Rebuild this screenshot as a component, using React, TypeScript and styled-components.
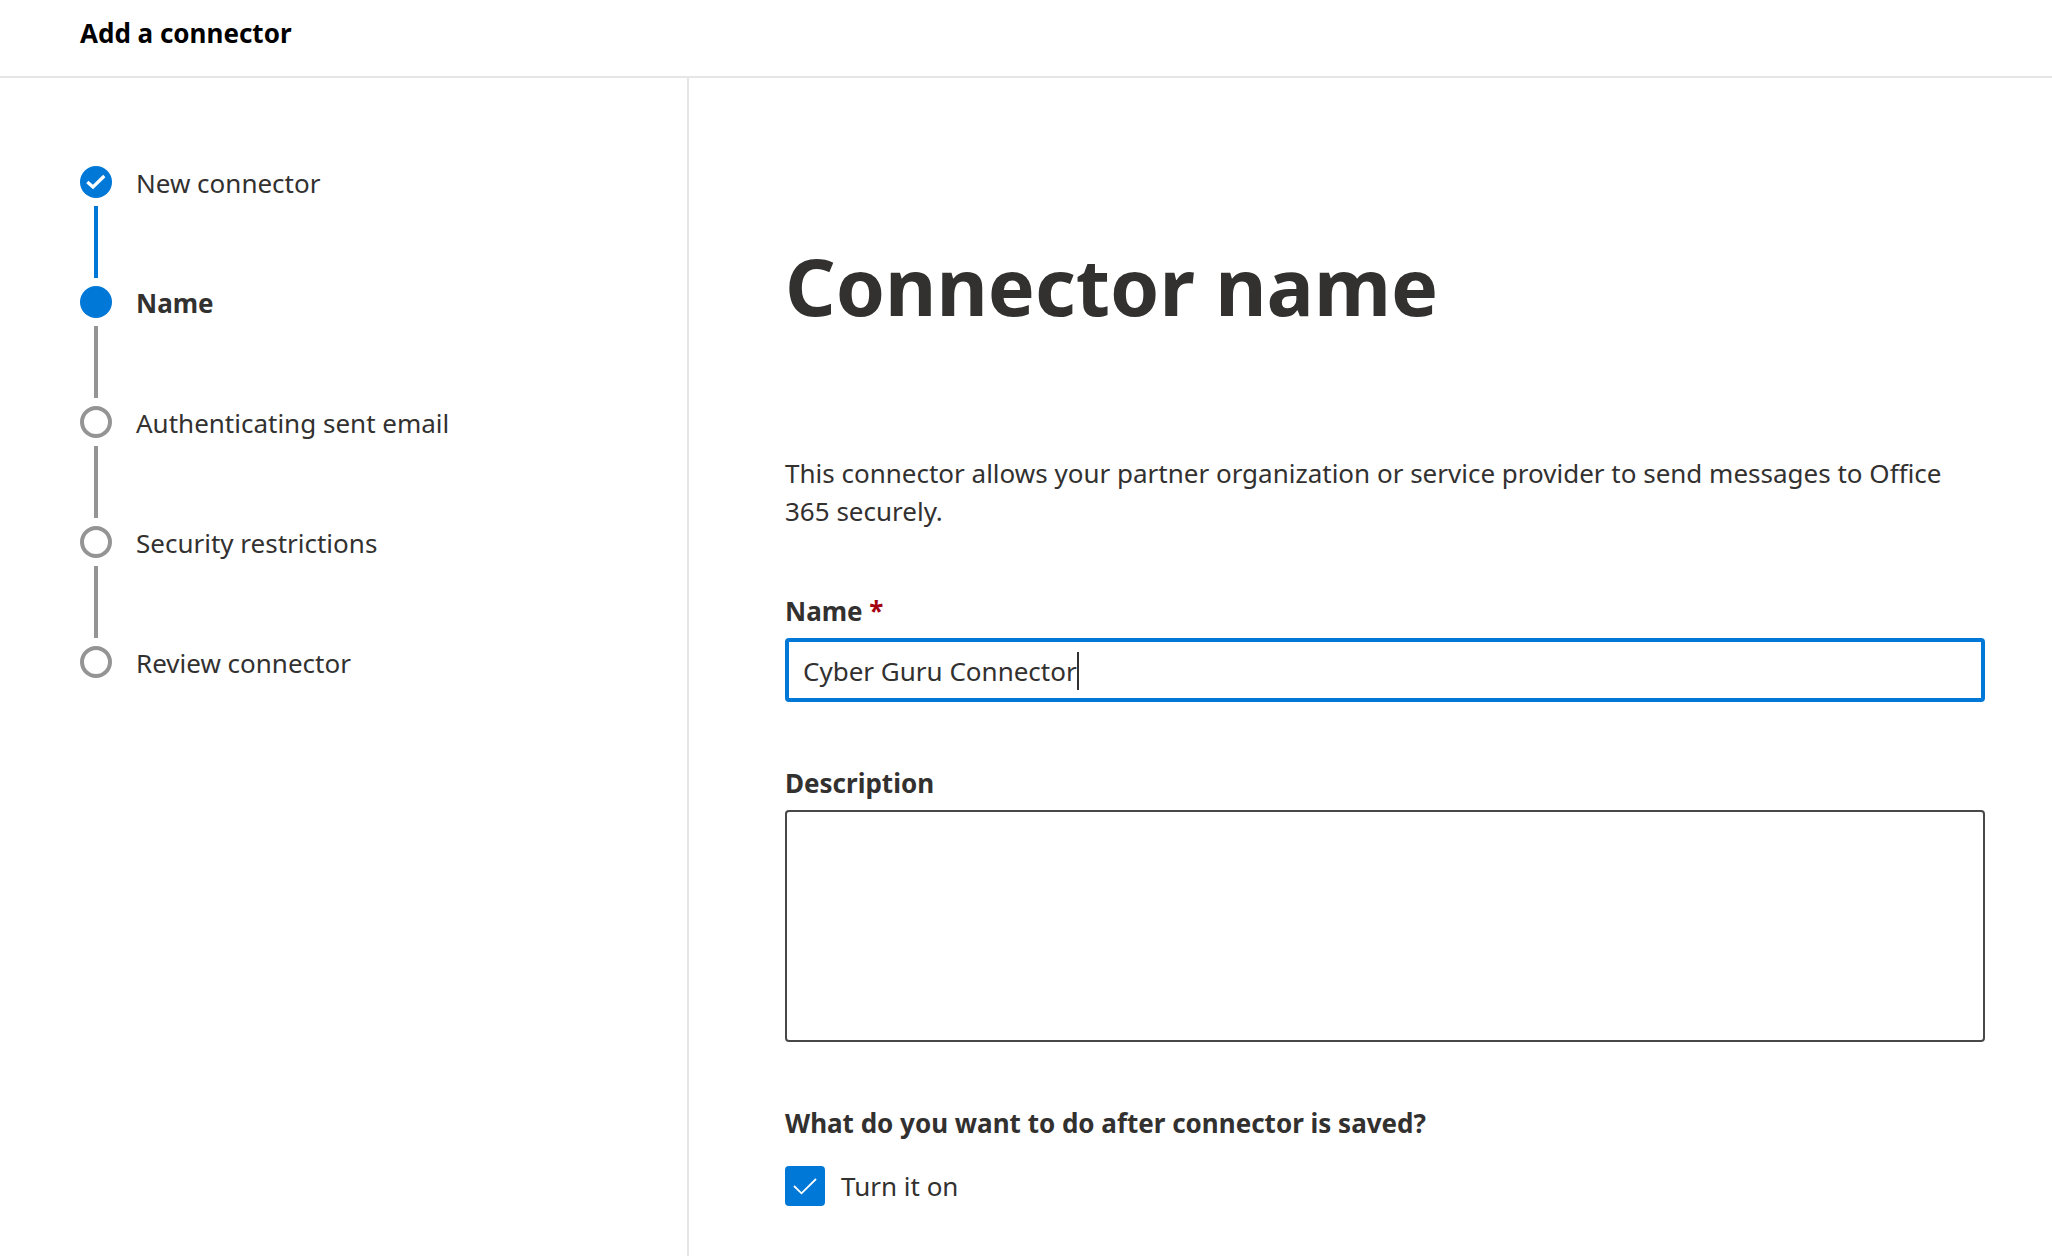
import { useState } from "react";
import styled, { createGlobalStyle, css } from "styled-components";

const GlobalStyle = createGlobalStyle`
  *, *::before, *::after { box-sizing: border-box; }
  body {
    margin: 0;
    background: #fff;
    color: #323130;
    font-family: "Segoe UI", "Noto Sans", "Open Sans", sans-serif;
    font-size: 26px;
    line-height: 38px;
  }
  h1, h2, p, ol { margin: 0; padding: 0; }
`;

const Page = styled.div`
  min-height: 100vh;
  display: flex;
  flex-direction: column;
`;

const Header = styled.header`
  padding: 14px 80px 24px;
  border-bottom: 2px solid #e6e6e6;
`;

const HeaderTitle = styled.h2`
  color: #000;
  font-size: 26px;
  font-weight: 700;
`;

const Body = styled.div`
  flex: 1;
  display: flex;
`;

const Sidebar = styled.nav`
  flex: 0 0 689px;
  padding: 88px 80px;
  border-right: 2px solid #e6e6e6;
`;

const StepList = styled.ol`
  list-style: none;
  display: flex;
  flex-direction: column;
  gap: 8px;
`;

type StepState = "done" | "current" | "todo";

const StepItem = styled.li`
  display: grid;
  grid-template-columns: 32px 1fr;
  grid-template-rows: 32px;
  column-gap: 24px;
  row-gap: 8px;
  justify-items: start;
`;

const StepMarker = styled.span<{ $state: StepState }>`
  width: 32px;
  height: 32px;
  display: flex;
  align-items: center;
  justify-content: center;
  border-radius: 50%;
  ${({ $state }) =>
    $state === "todo"
      ? css`border: 4px solid #949494;`
      : css`background: #0078d7;`}
`;

const StepLabel = styled.span<{ $current: boolean }>`
  line-height: 34px;
  font-weight: ${({ $current }) => ($current ? 700 : 400)};
`;

const StepTrack = styled.span<{ $done: boolean }>`
  width: 4px;
  height: 72px;
  justify-self: center;
  background: ${({ $done }) => ($done ? "#0078d7" : "#949494")};
`;

const Main = styled.main`
  flex: 1;
  min-width: 0;
  padding: 152px 67px 50px 96px;
`;

const Title = styled.h1`
  margin-bottom: 112px;
  font-size: 79px;
  line-height: 112px;
  font-weight: 700;
`;

const Form = styled.form`
  display: flex;
  flex-direction: column;
  gap: 62px;
`;

const Field = styled.div`
  display: flex;
  flex-direction: column;
  gap: 8px;
`;

const Label = styled.label`
  font-weight: 700;
`;

const Required = styled.span`
  color: #a4000f;
`;

const InputFrame = styled.label`
  height: 64px;
  display: flex;
  align-items: center;
  padding: 2px 14px 0;
  border: 4px solid #0078d7;
  border-radius: 4px;
  cursor: text;
`;

const TextInput = styled.input`
  field-sizing: content;
  min-width: 0;
  max-width: 100%;
  height: 38px;
  padding: 0;
  border: 0;
  outline: 0;
  background: transparent;
  color: inherit;
  font: inherit;
  caret-color: transparent;
`;

const Caret = styled.span`
  width: 2px;
  height: 38px;
  background: #323130;
`;

const TextArea = styled.textarea`
  display: block;
  width: 100%;
  height: 232px;
  padding: 12px 16px;
  border: 2px solid #484848;
  border-radius: 4px;
  outline: 0;
  resize: none;
  color: inherit;
  font: inherit;
`;

const Choices = styled.fieldset`
  min-width: 0;
  margin: 0;
  padding: 0;
  border: 0;
`;

const Legend = styled.legend`
  margin-bottom: 24px;
  padding: 0;
  font-weight: 700;
`;

const CheckLabel = styled.label`
  display: flex;
  align-items: center;
  gap: 16px;
  line-height: 40px;
`;

const CheckControl = styled.span`
  width: 40px;
  height: 40px;
  display: grid;
  & > * { grid-area: 1 / 1; }
  svg { pointer-events: none; }
`;

const CheckInput = styled.input`
  appearance: none;
  width: 40px;
  height: 40px;
  margin: 0;
  border: 2px solid #484848;
  border-radius: 4px;
  &:checked { background: #0078d7; border-color: #0078d7; }
`;

const steps: { label: string; state: StepState }[] = [
  { label: "New connector", state: "done" },
  { label: "Name", state: "current" },
  { label: "Authenticating sent email", state: "todo" },
  { label: "Security restrictions", state: "todo" },
  { label: "Review connector", state: "todo" },
];

export default function App() {
  const [name, setName] = useState("Cyber Guru Connector");
  const [enabled, setEnabled] = useState(true);

  return (
    <Page>
      <GlobalStyle />
      <Header>
        <HeaderTitle>Add a connector</HeaderTitle>
      </Header>
      <Body>
        <Sidebar aria-label="Steps">
          <StepList>
            {steps.map(({ label, state }, index) => (
              <StepItem key={label} aria-current={state === "current" ? "step" : undefined}>
                <StepMarker $state={state}>
                  {state === "done" && (
                    <svg width="32" height="32" viewBox="0 0 32 32" fill="none" aria-hidden="true">
                      <path d="M7.3 16 13 21 24.3 10" stroke="#fff" strokeWidth="3.2" />
                    </svg>
                  )}
                </StepMarker>
                <StepLabel $current={state === "current"}>{label}</StepLabel>
                {index < steps.length - 1 && <StepTrack $done={state === "done"} />}
              </StepItem>
            ))}
          </StepList>
        </Sidebar>
        <Main>
          <Title>Connector name</Title>
          <Form onSubmit={(event) => event.preventDefault()}>
            <p>
              This connector allows your partner organization or service provider to send messages
              to Office 365 securely.
            </p>
            <Field>
              <Label htmlFor="connector-name">
                Name <Required>*</Required>
              </Label>
              <InputFrame htmlFor="connector-name">
                <TextInput
                  id="connector-name"
                  type="text"
                  required
                  value={name}
                  onChange={(event) => setName(event.target.value)}
                />
                <Caret />
              </InputFrame>
            </Field>
            <Field>
              <Label htmlFor="connector-description">Description</Label>
              <TextArea id="connector-description" />
            </Field>
            <Choices>
              <Legend>What do you want to do after connector is saved?</Legend>
              <CheckLabel>
                <CheckControl>
                  <CheckInput
                    type="checkbox"
                    checked={enabled}
                    onChange={(event) => setEnabled(event.target.checked)}
                  />
                  {enabled && (
                    <svg width="40" height="40" viewBox="0 0 40 40" fill="none" aria-hidden="true">
                      <path d="M9 20 16.5 27.3 31 13" stroke="#fff" strokeWidth="1.8" />
                    </svg>
                  )}
                </CheckControl>
                Turn it on
              </CheckLabel>
            </Choices>
          </Form>
        </Main>
      </Body>
    </Page>
  );
}
